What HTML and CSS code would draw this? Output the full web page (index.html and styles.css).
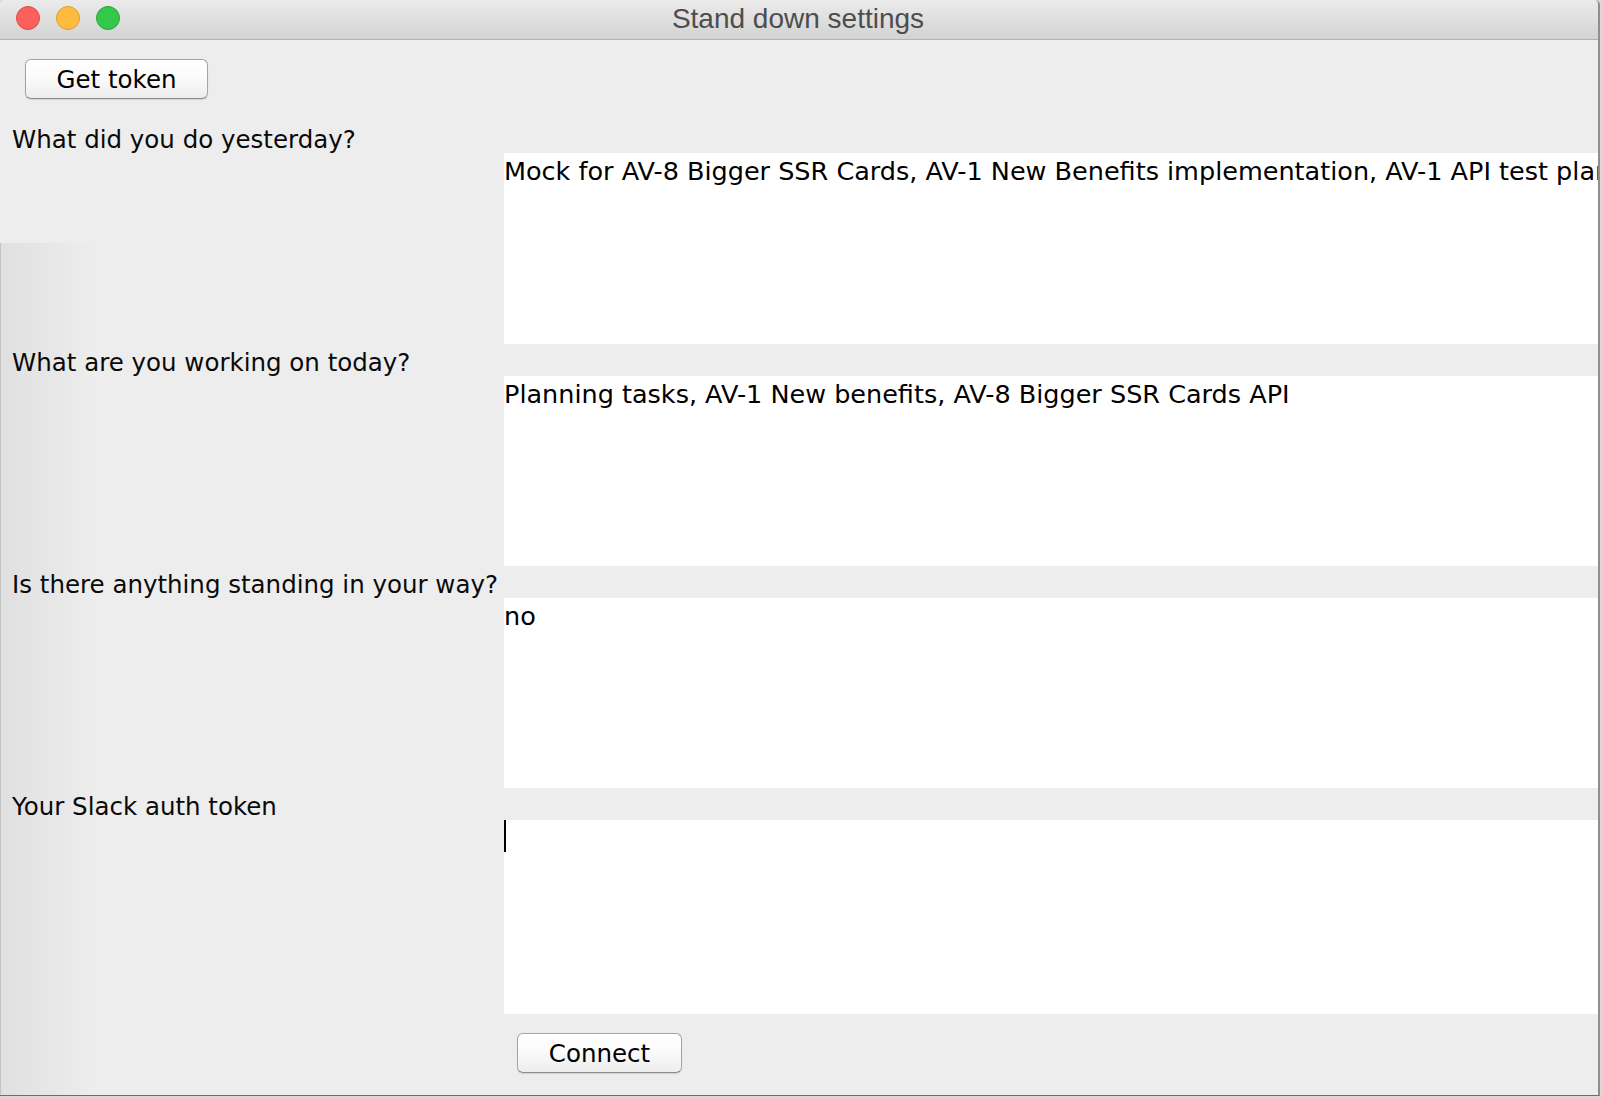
FILE: index.html
```html
<!DOCTYPE html>
<html lang="en">
<head>
<meta charset="utf-8">
<title>Stand down settings</title>
<link rel="stylesheet" href="styles.css">
</head>
<body>
<div class="window">
  <header class="titlebar">
    <div class="lights">
      <span class="light red"></span>
      <span class="light yellow"></span>
      <span class="light green"></span>
    </div>
    <div class="title">Stand down settings</div>
    <div></div>
  </header>
  <main class="content">
    <button class="btn btn-token" type="button">Get token</button>
    <div class="form">
      <div class="label">What did you do yesterday?</div>
      <div class="field h191">Mock for AV-8 Bigger SSR Cards, AV-1 New Benefits implementation, AV-1 API test plan</div>
      <div class="label">What are you working on today?</div>
      <div class="field h190">Planning tasks, AV-1 New benefits, AV-8 Bigger SSR Cards API</div>
      <div class="label">Is there anything standing in your way?</div>
      <div class="field h190">no</div>
      <div class="label">Your Slack auth token</div>
      <div class="field h194"><span class="caret"></span></div>
      <button class="btn btn-connect" type="button">Connect</button>
    </div>
  </main>
</div>
</body>
</html>
```

FILE: styles.css
```css
html, body {
  margin: 0;
  padding: 0;
}

body {
  width: 1602px;
  height: 1098px;
  overflow: hidden;
  background: #d9d9d9;
  font-family: "DejaVu Sans", "Liberation Sans", sans-serif;
}

.window {
  width: 1598px;
  height: 1095px;
  border-right: 2px solid #8e8e8e;
  border-bottom: 1px solid #6d6d6d;
  border-radius: 5px 5px 0 0;
  overflow: hidden;
  background:
    linear-gradient(to right, #c4c4c4 0, #c4c4c4 1px, #e0e0e0 1px, rgba(237, 237, 237, 0) 95px) 0 243px / 100px 860px no-repeat,
    #ededed;
  display: flex;
  flex-direction: column;
}

.titlebar {
  height: 39px;
  flex: none;
  border-bottom: 1px solid #b3b3b3;
  background: linear-gradient(#ebebeb, #dadada 70%, #d3d3d3);
  display: grid;
  grid-template-columns: 1fr auto 1fr;
  align-items: start;
}

.lights {
  display: flex;
  gap: 16px;
  padding: 6px 0 0 16px;
}

.light {
  width: 24px;
  height: 24px;
  box-sizing: border-box;
  border-radius: 50%;
  border: 1px solid;
}

.red { background: #fc605c; border-color: #de4946; }
.yellow { background: #fdbc40; border-color: #dd9e2f; }
.green { background: #34c84a; border-color: #25a834; }

.title {
  font-family: "Liberation Sans", Arial, sans-serif;
  font-size: 28px;
  line-height: 37px;
  color: #4d4d4d;
  margin-left: -2px;
}

.content {
  flex: 1;
  padding-top: 19px;
  display: flex;
  flex-direction: column;
  align-items: flex-start;
}

.btn {
  height: 40px;
  box-sizing: border-box;
  padding: 0;
  border: 1px solid #a4a4a4;
  border-bottom-color: #8c8c8c;
  border-radius: 6px;
  background: linear-gradient(#ffffff, #fbfbfb 45%, #ededed);
  box-shadow: 0 1px 1px rgba(0, 0, 0, 0.12);
  font-family: "DejaVu Sans", "Liberation Sans", sans-serif;
  font-size: 24.5px;
  line-height: 37px;
  color: #000;
}

.btn-token {
  width: 183px;
  margin-left: 25px;
}

.form {
  margin-top: 22px;
  width: 100%;
  display: grid;
  grid-template-columns: 504px 1fr;
}

.label {
  grid-column: 1 / -1;
  height: 32px;
  padding: 6px 0 0 12px;
  box-sizing: border-box;
  font-size: 24.5px;
  line-height: 26px;
  color: #0a0a0a;
  white-space: nowrap;
}

.field {
  grid-column: 2;
  background: #ffffff;
  font-size: 25.5px;
  line-height: 37px;
  color: #000;
  white-space: nowrap;
  overflow: hidden;
}

.h191 { height: 191px; }
.h190 { height: 190px; }
.h194 { height: 194px; }

.caret {
  display: inline-block;
  width: 2px;
  height: 32px;
  background: #000;
  vertical-align: top;
}

.btn-connect {
  grid-column: 2;
  justify-self: start;
  width: 165px;
  margin: 19px 0 0 13px;
}
```
